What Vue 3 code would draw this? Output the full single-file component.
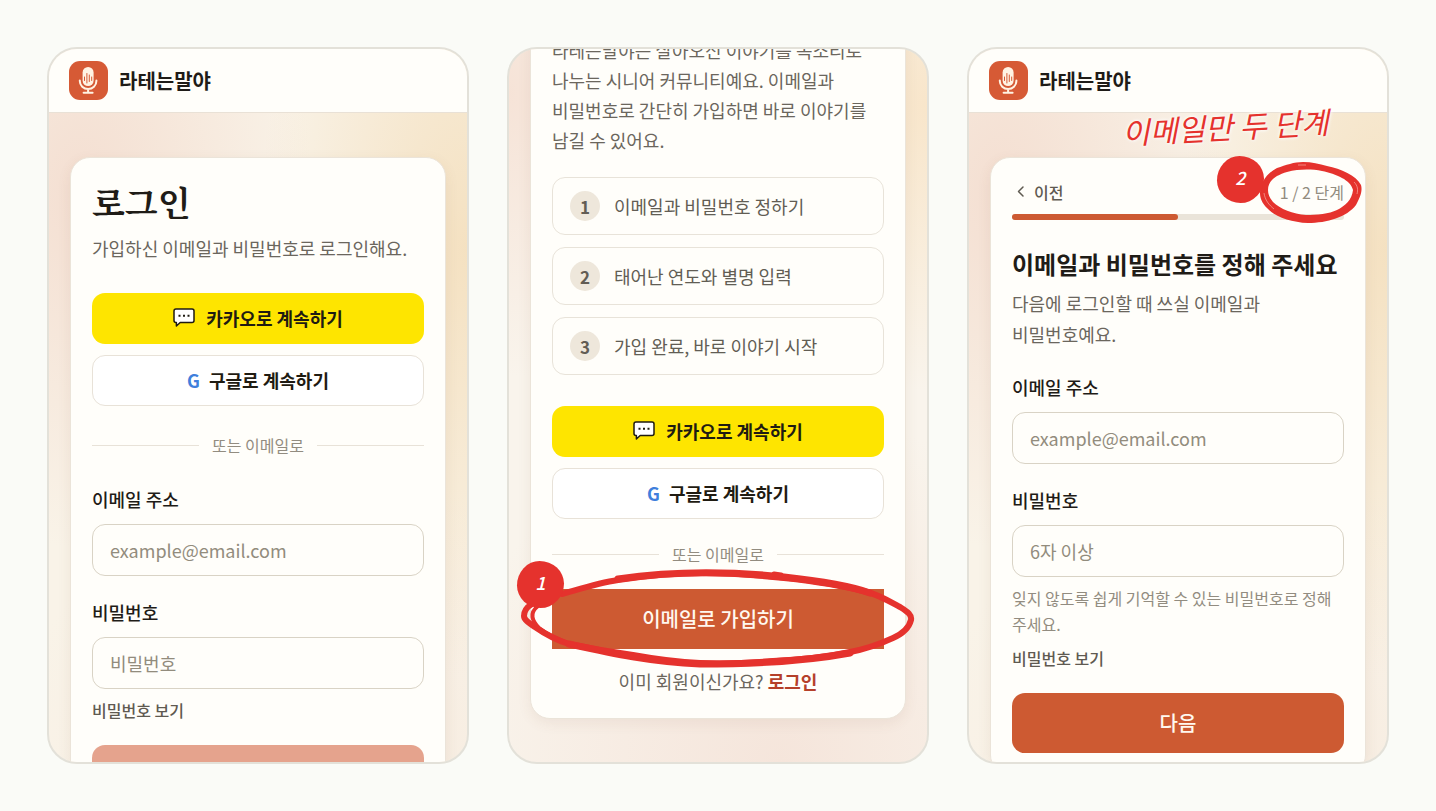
<template>
  <main class="stage">
    <!-- 로그인 -->
    <section class="phone">
      <header class="app-header">
        <svg class="app-logo" viewBox="0 0 39 39" aria-hidden="true">
          <rect width="39" height="39" rx="11" fill="#d65a35" />
          <rect x="13.6" y="6" width="11" height="19" rx="5.5" fill="#fff3e3" />
          <path d="M10.8 19.5v.6a8.3 8 0 0 0 16.6 0v-.6M19.100 28v3.4M14.6 31.8h9" fill="none" stroke="#fff3e3" stroke-width="2" stroke-linecap="round" />
          <path d="M15.500 16v3.500M17.900 12.500v9.500M20.300 14v6.500M22.700 16v3.500" fill="none" stroke="#d65a35" stroke-width="1" stroke-linecap="round" />
        </svg>
        <span class="app-name">라테는말야</span>
      </header>
      <div class="app-body">
        <form class="card" @submit.prevent>
          <h1 class="login-title">로그인</h1>
          <p class="login-desc">가입하신 이메일과 비밀번호로 로그인해요.</p>
          <div class="social-buttons login-social">
            <button type="button" class="social-button kakao">
              <svg class="chat-icon" viewBox="0 0 22 19" aria-hidden="true">
                <path d="M3 1h16a2 2 0 0 1 2 2v9.500a2 2 0 0 1-2 2H7.200L3.400 18v-3.500H3a2 2 0 0 1-2-2V3a2 2 0 0 1 2-2z" fill="#fff" stroke="#1f1b12" stroke-width="1.500" stroke-linejoin="round" />
                <path d="M5.500 6.800h2v2h-2zM10 6.800h2v2h-2zM14.500 6.800h2v2h-2z" fill="#1f1b12" />
              </svg>
              카카오로 계속하기
            </button>
            <button type="button" class="social-button google"><span class="google-mark">G</span>구글로 계속하기</button>
          </div>
          <div class="divider login-divider">또는 이메일로</div>
          <div class="form-group">
            <label for="login-email">이메일 주소</label>
            <input id="login-email" v-model="login.email" type="email" placeholder="example@email.com">
          </div>
          <div class="form-group">
            <label for="login-password">비밀번호</label>
            <input id="login-password" v-model="login.password" :type="showLoginPassword ? 'text' : 'password'" placeholder="비밀번호">
          </div>
          <button type="button" class="show-password" @click="showLoginPassword = !showLoginPassword">비밀번호 보기</button>
          <button type="submit" class="primary-button" aria-label="로그인" :disabled="!login.email || !login.password"></button>
        </form>
      </div>
    </section>

    <!-- 가입 안내 -->
    <section class="phone phone-scrolled">
      <div class="card">
        <p class="intro">라테는말야는 살아오신 이야기를 목소리로 나누는 시니어 커뮤니티예요. 이메일과 비밀번호로 간단히 가입하면 바로 이야기를 남길 수 있어요.</p>
        <ol class="steps">
          <li v-for="(step, index) in steps" :key="step" class="step-item">
            <span class="step-number">{{ index + 1 }}</span>
            {{ step }}
          </li>
        </ol>
        <div class="social-buttons">
          <button type="button" class="social-button kakao">
            <svg class="chat-icon" viewBox="0 0 22 19" aria-hidden="true">
              <path d="M3 1h16a2 2 0 0 1 2 2v9.500a2 2 0 0 1-2 2H7.200L3.400 18v-3.500H3a2 2 0 0 1-2-2V3a2 2 0 0 1 2-2z" fill="#fff" stroke="#1f1b12" stroke-width="1.500" stroke-linejoin="round" />
              <path d="M5.500 6.800h2v2h-2zM10 6.800h2v2h-2zM14.500 6.800h2v2h-2z" fill="#1f1b12" />
            </svg>
            카카오로 계속하기
          </button>
          <button type="button" class="social-button google"><span class="google-mark">G</span>구글로 계속하기</button>
        </div>
        <div class="divider join-divider">또는 이메일로</div>
        <div class="join-action">
          <button type="button" class="primary-button join-button">이메일로 가입하기</button>
          <svg class="join-mark" viewBox="0 0 396 100" preserveAspectRatio="none" aria-hidden="true">
            <g fill="none" stroke="#e5322d" stroke-linecap="round" stroke-linejoin="round">
              <path d="M42 26C60 21 78 15 98 12C125 8 152 5 181 5C208 5 236 7 264 10C292 13 320 17 347 24C359 27 369 33 380 39C388 44 392 47 391 52C389 60 382 66 373 70C360 76 346 81 330 84C306 89 280 92 253 93C229 95 204 96 180 95C157 94 135 91 113 87C91 84 68 80 49 76C36 72 25 66 15 59C9 55 4 52 4 48C4 43 7 39 12 36" stroke-width="6" />
              <path d="M98 11C152 3 208 3 264 9C292 12 325 16 350 25M330 85C282 94 230 96 180 96C130 94 90 85 49 76" stroke-width="7" />
              <path d="M18 38C9 45 12 53 19 60C28 67 42 73 56 78" stroke-width="4" />
              <path d="M254 6l7 1" stroke-width="5" />
            </g>
          </svg>
          <span class="badge join-badge">1</span>
        </div>
        <p class="member-text">이미 회원이신가요? <a href="#">로그인</a></p>
      </div>
    </section>

    <!-- 이메일 가입 1단계 -->
    <section class="phone">
      <header class="app-header">
        <svg class="app-logo" viewBox="0 0 39 39" aria-hidden="true">
          <rect width="39" height="39" rx="11" fill="#d65a35" />
          <rect x="13.6" y="6" width="11" height="19" rx="5.5" fill="#fff3e3" />
          <path d="M10.8 19.5v.6a8.3 8 0 0 0 16.6 0v-.6M19.100 28v3.4M14.6 31.8h9" fill="none" stroke="#fff3e3" stroke-width="2" stroke-linecap="round" />
          <path d="M15.500 16v3.500M17.900 12.500v9.500M20.300 14v6.500M22.700 16v3.500" fill="none" stroke="#d65a35" stroke-width="1" stroke-linecap="round" />
        </svg>
        <span class="app-name">라테는말야</span>
      </header>
      <div class="app-body">
        <form class="card" @submit.prevent>
          <div class="progress-head">
            <button type="button" class="back-button">
              <svg class="back-icon" viewBox="0 0 16 16" aria-hidden="true">
                <path d="M11 3L6.500 7.500L11 12" fill="none" stroke="currentColor" stroke-width="1.500" stroke-linecap="round" stroke-linejoin="round" />
              </svg>
              이전
            </button>
            <div class="progress-count">
              1 / 2 단계
              <svg class="count-mark" viewBox="0 0 102 61" preserveAspectRatio="none" aria-hidden="true">
                <path fill="#e5322d" fill-rule="evenodd" d="M0 31C0 21 7 11 17 6C26 3 34 0 43 0C52 0 59 2 67 4C81 7 96 13 101 23C103 30 99 37 96 43C87 55 67 61 48 61C31 60 15 55 7 46C2 41 0 36 0 31ZM8 28C8 18 17 13 27 10C39 7 51 7 62 9C76 12 91 18 93 28C92 38 85 44 77 48C69 52 57 53 46 53C33 52 20 47 13 40C10 36 8 33 8 28Z" />
                <path d="M4 31C5 38 9 43 14 47M38 3l8 0M94 20c4 4 4 8 3 12" fill="none" stroke="#ffd8ce" stroke-width=".5" />
              </svg>
              <span class="badge count-badge">2</span>
            </div>
          </div>
          <div class="progress-track">
            <div class="progress-bar" :style="{ width: progress + '%' }"></div>
          </div>
          <h2 class="join-title">이메일과 비밀번호를 정해 주세요</h2>
          <p class="join-desc">다음에 로그인할 때 쓰실 이메일과 비밀번호예요.</p>
          <div class="form-group">
            <label for="join-email">이메일 주소</label>
            <input id="join-email" v-model="join.email" type="email" placeholder="example@email.com">
          </div>
          <div class="form-group">
            <label for="join-password">비밀번호</label>
            <input id="join-password" v-model="join.password" :type="showJoinPassword ? 'text' : 'password'" placeholder="6자 이상">
          </div>
          <p class="help-text">잊지 않도록 쉽게 기억할 수 있는 비밀번호로 정해 주세요.</p>
          <button type="button" class="show-password" @click="showJoinPassword = !showJoinPassword">비밀번호 보기</button>
          <button type="submit" class="primary-button">다음</button>
        </form>
      </div>
      <p class="hand-note">이메일만 두 단계</p>
    </section>
  </main>
</template>

<script setup>
import { ref, reactive, computed } from 'vue';

const steps = ['이메일과 비밀번호 정하기', '태어난 연도와 별명 입력', '가입 완료, 바로 이야기 시작'];

const login = reactive({ email: '', password: '' });
const join = reactive({ email: '', password: '' });

const showLoginPassword = ref(false);
const showJoinPassword = ref(false);

const currentStep = ref(1);
const progress = computed(() => (currentStep.value / 2) * 100);
</script>

<style>
body {
  margin: 0;
  background: #fafbf7;
}
</style>

<style scoped>
.stage {
  display: grid;
  grid-template-columns: repeat(3, minmax(0, 1fr));
  gap: 38px;
  height: 100vh;
  padding: 47px;
  box-sizing: border-box;
  font-family: "Noto Sans CJK KR", sans-serif;
  font-size: 18px;
  color: #1f1c17;
  word-break: keep-all;
}

.stage * {
  box-sizing: border-box;
}

p,
h1,
h2,
ol {
  margin: 0;
  padding: 0;
}

button {
  font-family: inherit;
  cursor: pointer;
}

.phone {
  position: relative;
  display: flex;
  flex-direction: column;
  min-height: 0;
  overflow: hidden;
  border: 2px solid #e3e1d9;
  border-radius: 30px;
  background:
    radial-gradient(ellipse 55% 50% at 8% 20%, rgba(242, 214, 200, 0.7), transparent),
    radial-gradient(ellipse 50% 60% at 100% 28%, rgba(243, 219, 180, 0.75), transparent),
    radial-gradient(ellipse 80% 40% at 70% 100%, rgba(243, 224, 212, 0.4), transparent),
    #f9f3e8;
}

.phone-scrolled {
  justify-content: flex-end;
  padding: 0 21px 43px;
  background:
    radial-gradient(ellipse 45% 40% at 0% 6%, rgba(244, 218, 204, 0.65), transparent),
    radial-gradient(ellipse 40% 40% at 100% 8%, rgba(248, 226, 194, 0.8), transparent),
    radial-gradient(ellipse 80% 50% at 65% 100%, rgba(243, 221, 210, 0.65), transparent),
    #f9f4ec;
}

.app-header {
  display: flex;
  align-items: center;
  flex-shrink: 0;
  gap: 11px;
  height: 64px;
  padding: 0 20px;
  border-bottom: 1px solid #e9e1d6;
  background: #fffefa;
}

.app-logo {
  width: 39px;
  height: 39px;
}

.app-name {
  font-size: 20px;
  font-weight: 700;
}

.app-body {
  padding: 44px 21px;
}

.card {
  flex-shrink: 0;
  padding: 21px;
  border: 1px solid #ebe4d9;
  border-radius: 20px;
  background: #fffefa;
  box-shadow: 0 4px 14px rgba(110, 80, 50, 0.08);
}

.login-title {
  font-family: "Noto Serif CJK KR", "Noto Serif KR", "Noto Sans CJK KR", serif;
  font-size: 34px;
  line-height: 46px;
  font-weight: 700;
}

.login-desc {
  margin-top: 8px;
  line-height: 30px;
  color: #6b665d;
}

.social-buttons {
  display: flex;
  flex-direction: column;
  gap: 11px;
}

.login-social {
  margin-top: 30px;
}

.social-button {
  display: flex;
  align-items: center;
  justify-content: center;
  gap: 11px;
  height: 51px;
  padding: 0 0 2px;
  border: none;
  border-radius: 13px;
  font-size: 18px;
  font-weight: 700;
  color: #1f1b12;
}

.kakao {
  background: #fee500;
}

.google {
  gap: 9px;
  border: 1px solid #e8e2d8;
  background: #fff;
}

.google-mark {
  color: #3f7fdc;
}

.chat-icon {
  width: 22px;
  height: 19px;
}

.divider {
  display: flex;
  align-items: center;
  gap: 13px;
  font-size: 16px;
  line-height: 24px;
  color: #928c80;
}

.divider::before,
.divider::after {
  content: "";
  flex: 1;
  height: 1px;
  background: #e8e2d8;
}

.login-divider {
  margin: 27px 0 29px;
}

.join-divider {
  margin: 23px 0;
}

.form-group + .form-group {
  margin-top: 23px;
}

label {
  display: block;
  margin-bottom: 12px;
  line-height: 26px;
  font-weight: 500;
}

input {
  display: block;
  width: 100%;
  height: 52px;
  padding: 0 17px;
  border: 1px solid #d9d3c5;
  border-radius: 13px;
  background: #fffefa;
  font-family: inherit;
  font-size: 18px;
  color: #1f1c17;
}

input::placeholder {
  color: #928c7d;
  opacity: 1;
}

.show-password {
  display: block;
  margin-top: 9px;
  padding: 0;
  border: none;
  background: none;
  font-size: 16px;
  line-height: 24px;
  font-weight: 500;
  color: #5f5a51;
}

.primary-button {
  display: block;
  width: 100%;
  height: 60px;
  margin-top: 23px;
  padding: 0 0 2px;
  border: none;
  border-radius: 13px;
  background: #cd5a32;
  font-size: 20px;
  font-weight: 500;
  color: #fff8ef;
}

.primary-button:disabled {
  background: #e5a38d;
}

.intro {
  line-height: 30px;
  color: #6b665d;
}

.steps {
  display: flex;
  flex-direction: column;
  gap: 12px;
  margin: 22px 0 31px;
  list-style: none;
}

.step-item {
  display: flex;
  align-items: center;
  gap: 14px;
  height: 58px;
  padding: 0 17px;
  border: 1px solid #e8e3d9;
  border-radius: 13px;
  color: #625d54;
}

.step-number {
  display: flex;
  align-items: center;
  justify-content: center;
  width: 30px;
  height: 30px;
  border-radius: 50%;
  background: #eee7db;
  font-size: 17px;
  font-weight: 700;
}

.join-action {
  position: relative;
}

.join-button {
  margin-top: 0;
  border-radius: 0;
}

.join-mark {
  position: absolute;
  top: -21px;
  left: -32px;
  width: calc(100% + 64px);
  height: 100px;
  pointer-events: none;
}

.badge {
  position: absolute;
  display: flex;
  align-items: center;
  justify-content: center;
  width: 47px;
  height: 47px;
  padding-bottom: 6px;
  border-radius: 48% 52% 50% 50% / 52% 48% 52% 48%;
  background: #e5322d;
  font-size: 18px;
  font-style: italic;
  font-weight: 500;
  color: #fff;
}

.join-badge {
  top: -28px;
  left: -35px;
}

.member-text {
  margin-top: 17px;
  margin-bottom: 1px;
  line-height: 30px;
  text-align: center;
  color: #6b665d;
}

.member-text a {
  font-weight: 700;
  color: #b5402a;
  text-decoration: none;
}

.progress-head {
  display: flex;
  justify-content: space-between;
  height: 26px;
  font-size: 16px;
  line-height: 26px;
}

.back-button {
  display: flex;
  align-items: center;
  gap: 6px;
  padding: 0;
  border: none;
  background: none;
  font-size: 16px;
  font-weight: 500;
  color: #5f5a51;
}

.back-icon {
  width: 16px;
  height: 16px;
}

.progress-count {
  position: relative;
  color: #928c80;
}

.count-mark {
  position: absolute;
  top: -17px;
  right: -18px;
  width: 102px;
  height: 61px;
}

.count-badge {
  top: -23px;
  right: 80px;
}

.progress-track {
  height: 6px;
  margin-top: 9px;
  border-radius: 3px;
  background: #eae4d9;
}

.progress-bar {
  height: 100%;
  border-radius: 3px;
  background: #cd5a32;
}

.join-title {
  margin-top: 26px;
  font-size: 24px;
  line-height: 36px;
  font-weight: 700;
}

.join-desc {
  margin: 6px 0 24px;
  line-height: 31px;
  color: #6b665d;
}

.help-text {
  margin-top: 8px;
  font-size: 16px;
  line-height: 26px;
  color: #928c80;
}

.hand-note {
  position: absolute;
  top: 57px;
  right: 58px;
  font-size: 30px;
  line-height: 40px;
  font-style: italic;
  font-weight: 400;
  color: #e5322d;
  text-shadow: 0 0 3px #fff, 0 0 4px #fff;
  transform: rotate(-3deg);
}
</style>
